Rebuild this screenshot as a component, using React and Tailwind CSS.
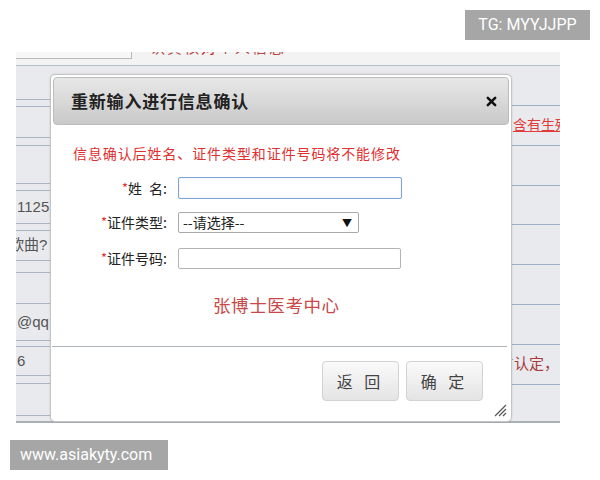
import React from "react";

const leftRows = [
  { h: 34 }, { h: 7 }, { h: 31 }, { h: 8 }, { h: 38 }, { h: 7 },
  { h: 33, t: "1125" }, { h: 7 }, { h: 30, t: "欧曲?", cut: true }, { h: 12 },
  { h: 31 }, { h: 37, t: "@qq" }, { h: 6 }, { h: 29, t: "6" }, { h: 8 }, { h: 32 },
];
const rightRows = [
  { h: 40 }, { h: 40, link: true }, { h: 40 }, { h: 39 }, { h: 40 }, { h: 40 },
  { h: 40 }, { h: 40, red: true },
];

function Asterisk() {
  return <span className="text-[#e02f2f] text-[13px] relative top-[-1px]">*</span>;
}

export default function App() {
  return (
    <div
      className="relative w-[600px] h-[480px] bg-white overflow-hidden flex flex-col"
      style={{ fontFamily: '"Liberation Sans", "Noto Sans CJK SC", sans-serif' }}
    >
      {/* TG watermark */}
      <div className="absolute left-[465px] top-[10px] w-[125px] h-[30px] bg-[#a6a6a6] text-white text-[16px] flex items-center justify-center" style={{ fontFamily: '"Roboto", "Liberation Sans", sans-serif' }}>
        TG: MYYJJPP
      </div>

      {/* screenshot panel */}
      <div className="mt-[52px] ml-[16px] relative w-[544px] h-[371px] bg-[#e9eaed] border-b-2 border-[#a9b0b8] flex flex-col">
        {/* top strip */}
        <div className="h-[14px] bg-[#f3f3f3] border-b border-[#b3bfcb] flex overflow-hidden">
          <div className="w-[116px] h-[7px] border-b border-r border-[#b9b9b9] bg-[#f7f7f7]" />
          <div className="ml-[18px] -mt-[14px] text-[15px] leading-[20px] text-[#b54a4a] whitespace-nowrap tracking-[2px]">
            认真核<span className="text-[#c02020]">对</span>个人信息
          </div>
        </div>
        <div className="flex flex-1">
          {/* left col */}
          <div className="w-[34px] flex flex-col overflow-hidden">
            {leftRows.map((r, i) => (
              <div
                key={i}
                className="border-b border-[#a9b5c3] flex items-center text-[15px] text-[#555] whitespace-nowrap"
                style={{ height: r.h }}
              >
                {r.t && <span className={r.cut ? "-ml-[7px]" : "ml-[1px]"}>{r.t}</span>}
              </div>
            ))}
          </div>
          <div className="flex-1" />
          {/* right col */}
          <div className="w-[48px] flex flex-col overflow-hidden">
            {rightRows.map((r, i) => (
              <div
                key={i}
                className="border-b border-[#9fb0c4] flex items-center whitespace-nowrap text-[14px]"
                style={{ height: r.h }}
              >
                {r.link && <span className="ml-[1px] text-[#e03a3a] underline">含有生殖</span>}
                {r.red && <span className="-ml-[3px] text-[#a83a3a] text-[15px]">`认定，</span>}
              </div>
            ))}
          </div>
        </div>

        {/* dialog */}
        <div className="absolute left-[34px] top-[22px] w-[462px] h-[348px] bg-white border border-[#c4c4c4] rounded-[5px] shadow-[0_0_2px_rgba(0,0,0,0.15)] flex flex-col" style={{ fontFamily: '"Noto Sans CJK SC", "Liberation Sans", sans-serif' }}>
          <div className="mt-[2px] mx-[2px] h-[48px] rounded-[4px] border border-[#bcbcbc] bg-gradient-to-b from-[#e8e8e8] to-[#c9c9c9] flex items-center justify-between pl-[17px] pr-[11px]">
            <span className="text-[17px] font-bold text-[#222] tracking-[0.8px]">重新输入进行信息确认</span>
            <svg width="11" height="11" viewBox="0 0 12 12">
              <path d="M2 2 L10 10 M10 2 L2 10" stroke="#111" strokeWidth="2.8" strokeLinecap="round" />
            </svg>
          </div>

          <div className="mt-[18px] pl-[22px] text-[14px] leading-[20px] tracking-[0.9px] text-[#e02f2f]">
            信息确认后姓名、证件类型和证件号码将不能修改
          </div>

          <div className="mt-[14px] flex items-center h-[22px]">
            <div className="w-[116px] text-right text-[14px] text-[#222]">
              <Asterisk />姓<span className="ml-[7px]">名:</span>
            </div>
            <div className="ml-[11px] w-[224px] h-[22px] border border-[#7da2d6] rounded-[2px] shadow-[inset_0_0_1px_rgba(80,130,200,0.5)]" />
          </div>

          <div className="mt-[13px] flex items-center h-[21px]">
            <div className="w-[116px] text-right text-[14px] text-[#222]">
              <Asterisk />证件类型:
            </div>
            <div className="ml-[11px] w-[181px] h-[21px] border border-[#a9a9a9] rounded-[2px] flex items-center justify-between pl-[4px] pr-[6px] text-[14px] text-[#222]">
              <span>--请选择--</span>
              <span className="text-[10px] text-[#111]">▼</span>
            </div>
          </div>

          <div className="mt-[15px] flex items-center h-[21px]">
            <div className="w-[116px] text-right text-[14px] text-[#222]">
              <Asterisk />证件号码:
            </div>
            <div className="ml-[11px] w-[223px] h-[21px] border border-[#b4b4b4] rounded-[2px]" />
          </div>

          <div className="mt-[24px] pl-[162px] text-[17.5px] leading-[24px] tracking-[0.6px] text-[#c94848]">
            张博士医考中心
          </div>

          <div className="mt-[29px] ml-[1px] mr-[4px] h-[1px] bg-[#aeb3b8]" />

          <div className="mt-[14px] flex justify-end gap-[7px] pr-[28px]">
            {["返 回", "确 定"].map((t) => (
              <div
                key={t}
                className="w-[77px] h-[40px] rounded-[4px] border border-[#d2d2d2] bg-gradient-to-b from-[#fafafa] to-[#e4e4e4] flex items-center justify-center text-[16px] text-[#444] tracking-[4px]"
              >
                {t}
              </div>
            ))}
          </div>

          <svg className="absolute right-[4px] bottom-[4px]" width="13" height="13" viewBox="0 0 13 13">
            <path d="M12 1 L1 12 M12 5 L5 12 M12 9 L9 12" stroke="#555" strokeWidth="1.2" />
          </svg>
        </div>
      </div>

      {/* bottom watermark */}
      <div className="mt-[17px] ml-[10px] w-[158px] h-[30px] bg-[#a6a6a6] text-white text-[16px] flex items-center pl-[10px]" style={{ fontFamily: '"Roboto", "Liberation Sans", sans-serif' }}>
        www.asiakyty.com
      </div>
    </div>
  );
}
